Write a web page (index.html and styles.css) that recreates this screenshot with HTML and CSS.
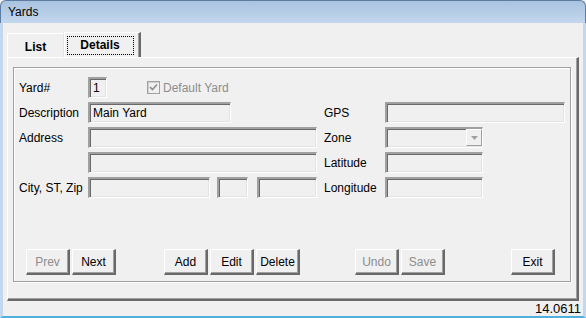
FILE: index.html
```html
<!DOCTYPE html>
<html>
<head>
<meta charset="utf-8">
<link rel="stylesheet" href="styles.css">
</head>
<body>
<div class="window">
  <div class="titlebar">Yards</div>
  <div class="frame">
    <div class="client">
      <div class="tabstrip">
        <div class="tab tab-list">List</div>
        <div class="tab tab-details"><span class="focus">Details</span></div>
      </div>
      <div class="tabpage">
        <div class="panel">
          <div class="fields">
            <div class="label">Yard#</div>
            <div class="cell row-flex">
              <div class="box w-yard">1</div>
              <div class="check-wrap">
                <span class="checkbox"><svg width="9" height="9" viewBox="0 0 9 9"><path d="M1 4 L3.5 6.5 L8 1.5" fill="none" stroke="#8d8d8d" stroke-width="1.6"/></svg></span>
                <span class="check-label">Default Yard</span>
              </div>
            </div>
            <div class="spacer"></div>
            <div class="label"></div>
            <div class="cell"></div>

            <div class="label">Description</div>
            <div class="cell"><div class="box w-desc">Main Yard</div></div>
            <div class="spacer"></div>
            <div class="label">GPS</div>
            <div class="cell"><div class="box w-gps"></div></div>

            <div class="label">Address</div>
            <div class="cell"><div class="box w-addr"></div></div>
            <div class="spacer"></div>
            <div class="label">Zone</div>
            <div class="cell">
              <div class="box w-right combo">
                <span class="dropbtn"><svg width="7" height="4" viewBox="0 0 7 4"><path d="M0 0 H7 L3.5 4 Z" fill="#a0a0a0"/></svg></span>
              </div>
            </div>

            <div class="label"></div>
            <div class="cell"><div class="box w-addr"></div></div>
            <div class="spacer"></div>
            <div class="label">Latitude</div>
            <div class="cell"><div class="box w-right"></div></div>

            <div class="label">City, ST, Zip</div>
            <div class="cell row-flex">
              <div class="box w-city"></div>
              <div class="box w-st"></div>
              <div class="box w-zip"></div>
            </div>
            <div class="spacer"></div>
            <div class="label">Longitude</div>
            <div class="cell"><div class="box w-right"></div></div>
          </div>

          <div class="buttons">
            <div class="btn disabled">Prev</div>
            <div class="btn">Next</div>
            <div class="btn group-add">Add</div>
            <div class="btn">Edit</div>
            <div class="btn">Delete</div>
            <div class="btn disabled group-undo">Undo</div>
            <div class="btn disabled">Save</div>
            <div class="btn group-exit">Exit</div>
          </div>
        </div>
      </div>
      <div class="status">14.0611</div>
    </div>
  </div>
</div>
</body>
</html>
```
FILE: styles.css
```css
* { box-sizing: border-box; }

html, body {
  margin: 0;
  padding: 0;
  width: 586px;
  height: 318px;
  overflow: hidden;
  background: #f0f0f0;
  font-family: "Liberation Sans", Arial, sans-serif;
  font-size: 12px;
  color: #000;
}

.window {
  width: 586px;
  height: 318px;
  display: flex;
  flex-direction: column;
}

.titlebar {
  height: 23px;
  flex: none;
  padding-left: 7px;
  line-height: 22px;
  background: linear-gradient(#a9c3e0, #c3d7ee);
  border: 1px solid #5e7c9f;
  border-bottom: none;
  border-radius: 6px 6px 0 0;
  color: #000;
}

.frame {
  flex: 1;
  display: flex;
  flex-direction: column;
  border-left: 3px solid #c3d7ee;
  border-right: 3px solid #c3d7ee;
  border-bottom: 2px solid #4fb0dc;
  box-shadow: inset 1px 0 0 #5e7c9f, inset -1px 0 0 #5e7c9f;
  position: relative;
}

.client {
  flex: 1;
  display: flex;
  flex-direction: column;
  background: #f0f0f0;
}

.tabstrip {
  height: 34px;
  flex: none;
  display: flex;
  align-items: flex-end;
  padding-left: 4px;
}

.tab {
  font-weight: bold;
  display: flex;
  align-items: center;
  justify-content: center;
  border-top: 1px solid #fff;
  border-left: 1px solid #fff;
  background: #f0f0f0;
}

.tab-list {
  width: 57px;
  height: 24px;
  padding-top: 3px;
  border-right: 1px solid #e3e3e3;
}

.tab-details {
  width: 77px;
  height: 25px;
  border-right: 2px solid #696969;
  box-shadow: inset -1px 0 0 #a0a0a0;
  padding-right: 4px;
}

.focus {
  display: block;
  width: 67px;
  height: 19px;
  line-height: 17px;
  text-align: center;
  border: 1px dotted #000;
}

.tabpage {
  flex: 1;
  display: flex;
  margin: 0 4px 0 4px;
  border-top: 1px solid #fff;
  border-left: 1px solid #fff;
  border-right: 2px solid #696969;
  border-bottom: 2px solid #696969;
  box-shadow: inset -1px -1px 0 #a0a0a0;
  padding: 9px 6px 17px 5px;
}

.panel {
  flex: 1;
  display: flex;
  flex-direction: column;
  border: 1px solid #a0a0a0;
  box-shadow: inset 1px 1px 0 #fff, 1px 1px 0 #fff;
  padding: 9px 5px 6px 5px;
}

.fields {
  display: grid;
  grid-template-columns: 69px 229px 7px 61px 180px;
  grid-auto-rows: 21px;
  row-gap: 4px;
}

.label {
  display: flex;
  align-items: center;
  white-space: nowrap;
}

.cell { display: flex; align-items: center; }
.row-flex { gap: 0; }

.box {
  height: 21px;
  border-top: 2px solid #a0a0a0;
  border-left: 2px solid #a0a0a0;
  border-right: 1px solid #fff;
  border-bottom: 1px solid #fff;
  box-shadow: inset 1px 1px 0 #696969, inset -1px -1px 0 #e3e3e3;
  background: #f0f0f0;
  padding-left: 3px;
  line-height: 18px;
  white-space: nowrap;
  position: relative;
}

.w-yard { width: 19px; }
.w-desc { width: 143px; }
.w-gps { width: 180px; }
.w-addr { width: 229px; }
.w-right { width: 98px; }
.w-city { width: 122px; }
.w-st { width: 31px; margin-left: 7px; }
.w-zip { width: 60px; margin-left: 9px; }

.check-wrap {
  display: flex;
  align-items: center;
  margin-left: 40px;
  color: #8d8d8d;
}

.checkbox {
  width: 13px;
  height: 13px;
  display: flex;
  align-items: center;
  justify-content: center;
  border: 1px solid #a0a0a0;
  box-shadow: inset 1px 1px 0 #d0d0d0;
  background: #f0f0f0;
  margin-right: 3px;
}

.combo { display: flex; justify-content: flex-end; padding: 0; }

.dropbtn {
  width: 16px;
  height: 17px;
  display: flex;
  align-items: center;
  justify-content: center;
  border-top: 1px solid #fff;
  border-left: 1px solid #fff;
  border-right: 1px solid #a0a0a0;
  border-bottom: 1px solid #a0a0a0;
  background: #f0f0f0;
}

.buttons {
  margin-top: auto;
  display: flex;
  padding-left: 7px;
  gap: 2px;
}

.btn {
  width: 44px;
  height: 26px;
  display: flex;
  align-items: center;
  justify-content: center;
  border-top: 1px solid #fff;
  border-left: 1px solid #fff;
  border-right: 2px solid #696969;
  border-bottom: 2px solid #696969;
  box-shadow: inset -1px -1px 0 #a0a0a0;
  background: #f0f0f0;
}

.btn.disabled { color: #8d8d8d; }
.group-add { margin-left: 46px; }
.group-undo { margin-left: 53px; }
.group-exit { margin-left: 64px; }

.status {
  height: 15px;
  flex: none;
  text-align: right;
  padding-right: 2px;
  font-size: 13px;
  line-height: 15px;
  color: #000;
}
```
